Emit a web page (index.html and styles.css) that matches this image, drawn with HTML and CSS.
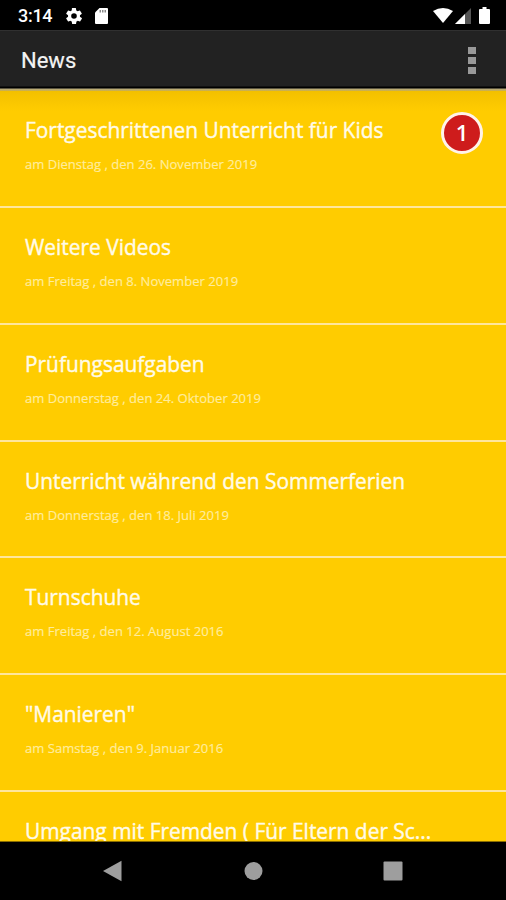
FILE: index.html
```html
<!DOCTYPE html>
<html lang="de">
<head>
<meta charset="utf-8">
<title>News</title>
<link rel="stylesheet" href="styles.css">
</head>
<body>
<div class="screen">
  <div class="status">
    <span class="clock">3:14</span>
    <svg class="gear" viewBox="2 2 20 20"><path fill-rule="evenodd" d="M19.4 13a7.500 7.500 0 0 0 0-2l2.100-1.600a.5.5 0 0 0 .1-.7l-2-3.400a.5.5 0 0 0-.6-.2l-2.500 1a7.300 7.300 0 0 0-1.700-1l-.4-2.700a.5.5 0 0 0-.5-.4h-4a.5.5 0 0 0-.5.4L9.200 5.100a7.700 7.700 0 0 0-1.700 1l-2.500-1a.5.5 0 0 0-.6.2l-2 3.400a.5.5 0 0 0 .1.700L4.600 11a7.900 7.900 0 0 0 0 2l-2.100 1.600a.5.5 0 0 0-.1.700l2 3.400c.1.200.4.300.6.200l2.500-1c.5.400 1.100.7 1.700 1l.4 2.700c0 .2.200.4.500.4h4c.3 0 .5-.2.500-.4l.4-2.700c.6-.3 1.200-.6 1.700-1l2.500 1c.2.100.5 0 .6-.2l2-3.400a.5.5 0 0 0-.1-.7zM12 15.500a3.500 3.500 0 1 1 0-7 3.500 3.500 0 0 1 0 7z"/></svg>
    <svg class="sd" viewBox="0 0 13 16"><path fill-rule="evenodd" d="M4.500 0H12a1 1 0 0 1 1 1v14a1 1 0 0 1-1 1H1a1 1 0 0 1-1-1V4.500z"/><path class="pins" d="M4.500 2v2.500H6V2zM7 2v2.500h1.500V2zM9.500 2v2.500H11V2z"/></svg>
    <span class="fill"></span>
    <svg class="wifi" viewBox="0 0 20 15"><path d="M0 3Q10-3 20 3L10 15z"/></svg>
    <svg class="signal" viewBox="0 0 16 16"><path class="dim" d="M16 0v16H0z"/><path d="M10 6v10H0z"/></svg>
    <svg class="battery" viewBox="0 0 11 17"><path d="M3.500 0h4v2H10a1 1 0 0 1 1 1v13a1 1 0 0 1-1 1H1a1 1 0 0 1-1-1V3a1 1 0 0 1 1-1h2.500z"/></svg>
  </div>
  <header class="bar">
    <h1>News</h1>
    <div class="more"><i></i><i></i><i></i></div>
  </header>
  <main class="list">
    <article><h2>Fortgeschrittenen Unterricht für Kids</h2><p>am Dienstag , den 26. November 2019</p><span class="badge">1</span></article>
    <article><h2>Weitere Videos</h2><p>am Freitag , den 8. November 2019</p></article>
    <article><h2>Prüfungsaufgaben</h2><p>am Donnerstag , den 24. Oktober 2019</p></article>
    <article><h2>Unterricht während den Sommerferien</h2><p>am Donnerstag , den 18. Juli 2019</p></article>
    <article><h2>Turnschuhe</h2><p>am Freitag , den 12. August 2016</p></article>
    <article><h2>"Manieren"</h2><p>am Samstag , den 9. Januar 2016</p></article>
    <article><h2>Umgang mit Fremden ( Für Eltern der Sc...</h2></article>
  </main>
  <nav class="nav">
    <svg viewBox="0 0 20 22"><path d="M0 11 18.500 .8v20.400z"/></svg>
    <svg viewBox="0 0 20 22"><circle cx="10.500" cy="11" r="9"/></svg>
    <svg viewBox="0 0 20 22"><rect x=".5" y="1.500" width="19" height="19" rx="1"/></svg>
  </nav>
</div>
</body>
</html>
```
FILE: styles.css
```css
* { box-sizing: border-box; }
body { margin: 0; background: #000; }
.screen {
  width: 506px;
  height: 900px;
  display: flex;
  flex-direction: column;
  overflow: hidden;
  font-family: "Open Sans", "Noto Sans", sans-serif;
}
.status {
  height: 30px;
  flex: none;
  display: flex;
  align-items: center;
  padding: 0 16px 0 18px;
  background: #000;
  color: #fff;
}
.status svg { fill: #fff; flex: none; }
.clock { width: 48px; font: 500 18px/30px Roboto, sans-serif; letter-spacing: -0.3px; padding-top: 1px; }
.gear { width: 16px; height: 16px; margin-top: 1px; }
.sd { width: 13px; height: 16px; margin-left: 13px; margin-top: 1px; }
.sd .pins { fill: #888; }
.fill { flex: 1; }
.wifi { width: 20px; height: 15px; }
.signal { width: 16px; height: 16px; margin: 1px 8px 0 2px; }
.signal .dim { fill: #555; }
.battery { width: 11px; height: 17px; }
.bar {
  height: 61px;
  flex: none;
  display: flex;
  justify-content: space-between;
  padding: 0 30px 0 21px;
  background: linear-gradient(#303030 0 1px, #222 1px 56px, #000 57px 58px, #b5aa82 59px, #d0b143 61px);
}
.bar h1 { margin: 0; color: #f4f4f4; font: 400 22px/61px Roboto, sans-serif; -webkit-text-stroke: 0.2px #f4f4f4; }
.more { display: flex; flex-direction: column; gap: 3px; padding-top: 17px; }
.more i { width: 8px; height: 7px; background: #999; }
.list {
  flex: 1;
  min-height: 0;
  overflow: hidden;
  background: linear-gradient(#f3c000, #fc0 20px);
  border-bottom: 1px solid #8a6e00;
}
article {
  position: relative;
  height: 116.850px;
  padding: 23px 25px 0;
  border-bottom: 2.500px solid #ffe69c;
}
h2, p { transform-origin: left center; white-space: nowrap; }
h2 {
  margin: 0;
  color: #fffbe8;
  font-size: 22px;
  line-height: 31px;
  font-weight: 400;
  transform: scaleX(0.95);
  -webkit-text-stroke: 0.4px #fffbe8;
}
p {
  margin: 9px 0 0;
  color: #ffec9c;
  font-size: 13.500px;
  line-height: 20px;
  transform: scaleX(0.967);
  -webkit-text-stroke: 0.2px #ffec9c;
}
.badge {
  position: absolute;
  top: 21px;
  right: 23px;
  width: 42px;
  height: 42px;
  border: 3px solid #fff3ea;
  border-radius: 50%;
  background: #ce1c1c;
  color: #fff;
  font-size: 22px;
  font-weight: 600;
  line-height: 34px;
  text-align: center;
}
.nav {
  height: 58px;
  flex: none;
  display: flex;
  align-items: center;
  justify-content: center;
  gap: 120px;
  background: #000;
}
.nav svg { width: 20px; height: 22px; fill: #9e9e9e; }
```
